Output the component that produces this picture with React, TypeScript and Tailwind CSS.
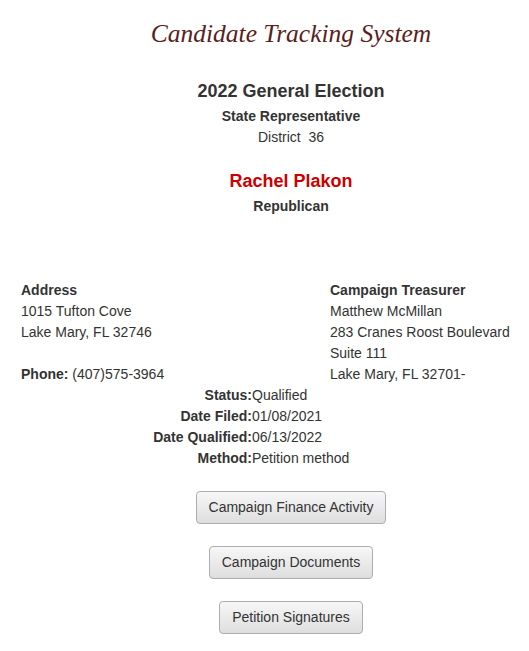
export default function App() {
  const sans = { fontFamily: '"Liberation Sans", Arial, sans-serif' };
  const btn =
    "h-[33px] px-[12px] rounded-[4px] border border-[#adadad] bg-gradient-to-b from-[#f7f7f7] to-[#dedede] text-[14px] text-[#333]";
  return (
    <div className="w-[529px] min-h-[651px] overflow-hidden bg-white text-[#333]" style={sans}>
      <div className="w-[582px] flex flex-col items-center">
        <h1
          className="mt-[16px] h-[36px] text-[25.5px] leading-[36px] italic text-[#5a1e1e]"
          style={{ fontFamily: '"Liberation Serif", "Times New Roman", serif' }}
        >
          Candidate Tracking System
        </h1>
        <div className="mt-[26px] text-[18px] leading-[26px] font-bold">2022 General Election</div>
        <div className="mt-[2px] text-[14px] leading-[21px] font-bold">State Representative</div>
        <div className="text-[14px] leading-[21px]">District&nbsp; 36</div>
        <div className="mt-[20px] text-[18px] leading-[26px] font-bold text-[#cc0000]">Rachel Plakon</div>
        <div className="mt-[2px] text-[14px] leading-[21px] font-bold">Republican</div>
      </div>
      <div className="mt-[63px] flex text-[14px] leading-[21px]">
        <div className="w-[330px] pl-[21px]">
          <div className="font-bold">Address</div>
          <div>1015 Tufton Cove</div>
          <div>Lake Mary, FL 32746</div>
          <div>&nbsp;</div>
          <div>
            <span className="font-bold">Phone:</span> (407)575-3964
          </div>
        </div>
        <div className="whitespace-nowrap">
          <div className="font-bold">Campaign Treasurer</div>
          <div>Matthew McMillan</div>
          <div>283 Cranes Roost Boulevard</div>
          <div>Suite 111</div>
          <div>Lake Mary, FL 32701-</div>
        </div>
      </div>
      <div className="flex flex-col text-[14px] leading-[21px]">
        {[
          ["Status:", "Qualified"],
          ["Date Filed:", "01/08/2021"],
          ["Date Qualified:", "06/13/2022"],
          ["Method:", "Petition method"],
        ].map(([k, v]) => (
          <div key={k} className="flex">
            <div className="w-[252px] text-right font-bold">{k}</div>
            <div>{v}</div>
          </div>
        ))}
      </div>
      <div className="w-[582px] flex flex-col items-center gap-[22px] mt-[22px]">
        <button className={btn}>Campaign Finance Activity</button>
        <button className={btn}>Campaign Documents</button>
        <button className={btn}>Petition Signatures</button>
      </div>
    </div>
  );
}
